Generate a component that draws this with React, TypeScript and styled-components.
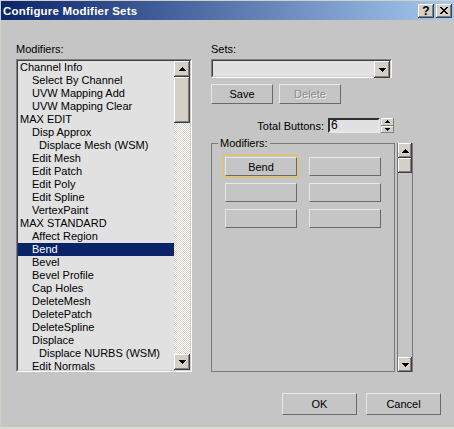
import React from "react";
import styled, { createGlobalStyle, css } from "styled-components";

const face = "#c5c5c5";
const listBg = "#e1e1e1";
const ctlFace = "#d4d0c8";
const selBlue = "#0a246a";

const GlobalStyle = createGlobalStyle`
  html, body {
    margin: 0;
    padding: 0;
    background: ${face};
  }
  body {
    font-family: "Liberation Sans", Arial, sans-serif;
    font-size: 11px;
    color: #000;
  }
`;

const raised = css`
  box-shadow: inset -1px -1px #404040, inset 1px 1px #fff,
    inset -2px -2px #808080, inset 2px 2px ${ctlFace};
`;

const Window = styled.div`
  width: 454px;
  height: 429px;
  box-sizing: border-box;
  background: ${face};
  border-top: 1px solid ${ctlFace};
  border-left: 1px solid ${ctlFace};
  border-bottom: 2px solid #dcdad4;
  display: flex;
  flex-direction: column;
`;

const TitleBar = styled.div`
  height: 19px;
  display: flex;
  align-items: center;
  padding: 0 2px;
  background: linear-gradient(to right, ${selBlue}, #a6caf0);
  color: #fff;
  font-weight: bold;
  font-size: 11.5px;
`;

const Title = styled.span`
  flex: 1;
  white-space: nowrap;
  letter-spacing: 0.2px;
`;

const TitleButton = styled.div`
  width: 16px;
  height: 14px;
  box-sizing: border-box;
  margin-left: 2px;
  background: ${ctlFace};
  ${raised};
  display: flex;
  align-items: center;
  justify-content: center;
  color: #000;
  font-weight: bold;
  font-size: 12px;
  line-height: 14px;
`;

const Body = styled.div`
  flex: 1;
  display: flex;
  flex-direction: column;
  padding: 23px 13px 0 15px;
`;

const Columns = styled.div`
  display: grid;
  grid-template-columns: 176px 202px;
  column-gap: 19px;
`;

const Column = styled.div`
  display: flex;
  flex-direction: column;
`;

const Label = styled.div`
  height: 13px;
  line-height: 13px;
  margin-bottom: 3px;
  white-space: nowrap;
`;

const Sunken = styled.div`
  box-sizing: border-box;
  border: 1px solid;
  border-color: #808080 #fff #fff #808080;
`;

const SunkenInner = styled.div`
  box-sizing: border-box;
  height: 100%;
  border: 1px solid;
  border-color: #404040 ${ctlFace} ${ctlFace} #404040;
  background: ${listBg};
  display: flex;
`;

const ListBox = styled(Sunken)`
  height: 313px;
`;

const Items = styled.div`
  flex: 1;
  overflow: hidden;
  display: flex;
  flex-direction: column;
`;

const Item = styled.div<{ $level: number; $selected?: boolean }>`
  flex: none;
  height: 13px;
  line-height: 13px;
  white-space: nowrap;
  padding-left: ${p => [2, 14, 21][p.$level]}px;
  background: ${p => (p.$selected ? selBlue : "transparent")};
  color: ${p => (p.$selected ? "#fff" : "#000")};
`;

const VScroll = styled.div<{ $plain?: boolean }>`
  width: 16px;
  flex: none;
  display: flex;
  flex-direction: column;
  box-sizing: border-box;
  ${p =>
    p.$plain &&
    css`
      border-left: 1px solid #7a7a7a;
      border-right: 1px solid #7a7a7a;
      background: ${face};
    `}
`;

const ArrowButton = styled.div<{ $h?: number; $w?: number }>`
  flex: none;
  height: ${p => p.$h ?? 16}px;
  ${p => p.$w && `width: ${p.$w}px;`}
  box-sizing: border-box;
  background: ${ctlFace};
  ${raised};
  display: flex;
  align-items: center;
  justify-content: center;
`;

const Track = styled.div<{ $checker?: boolean }>`
  flex: 1;
  display: flex;
  flex-direction: column;
  ${p =>
    p.$checker &&
    css`
      background-color: #fff;
      background-image: repeating-conic-gradient(
        ${ctlFace} 0 25%,
        #fff 0 50%
      );
      background-size: 2px 2px;
    `}
`;

const Thumb = styled.div<{ $h: number }>`
  height: ${p => p.$h}px;
  flex: none;
  background: ${ctlFace};
  ${raised};
`;

const Combo = styled(Sunken)`
  height: 19px;
  width: 181px;
`;

const ComboField = styled.div`
  flex: 1;
`;

const ButtonRow = styled.div`
  display: flex;
  gap: 6px;
  margin-top: 6px;
`;

const MaxButton = styled.button<{ $w: number; $h: number }>`
  display: block;
  width: ${p => p.$w}px;
  height: ${p => p.$h}px;
  box-sizing: border-box;
  padding: 0;
  margin: 0;
  background: ${face};
  border: 1px solid;
  border-color: #e8e8e8 #6a6a6a #6a6a6a #e8e8e8;
  font-family: inherit;
  font-size: 11px;
  color: #000;
  &:disabled {
    color: #8a8a8a;
    text-shadow: 1px 1px #f0f0f0;
  }
`;

/* the yellow frame 3ds Max draws round the active set button */
const ActiveFrame = styled.div`
  margin: -2px;
  padding: 1px;
  border: 1px solid #f0c23e;
`;

const TotalRow = styled.div`
  display: flex;
  align-items: center;
  justify-content: flex-end;
  margin-top: 14px;
  padding-right: 19px;
  height: 15px;
`;

const TotalLabel = styled.span`
  margin-right: 4px;
`;

const SpinField = styled.div`
  width: 52px;
  height: 15px;
  box-sizing: border-box;
  border: 2px solid;
  border-color: #303030 #e8e8e8 #e8e8e8 #303030;
  background: ${listBg};
  line-height: 11px;
  padding-left: 1px;
  font-size: 12px;
`;

const Spinner = styled.div`
  width: 13px;
  height: 15px;
  margin-left: 1px;
  display: flex;
  flex-direction: column;
`;

const SpinHalf = styled.div`
  flex: 1;
  background: ${ctlFace};
  box-shadow: inset -1px -1px #808080, inset 1px 1px #fff;
  display: flex;
  align-items: center;
  justify-content: center;
`;

const GroupRow = styled.div`
  display: flex;
  align-items: flex-end;
  gap: 2px;
  margin-top: 4px;
`;

const Group = styled.fieldset`
  width: 184px;
  height: 235px;
  box-sizing: border-box;
  margin: 0;
  padding: 0;
  min-width: 0;
  border: 1px solid #7a7a7a;
`;

const Legend = styled.legend`
  margin-left: 6px;
  padding: 0 2px;
  line-height: 13px;
  height: 13px;
`;

const SlotGrid = styled.div`
  display: grid;
  grid-template-columns: 72px 72px;
  grid-auto-rows: 19px;
  column-gap: 12px;
  row-gap: 7px;
  margin: 7px 0 0 13px;
`;

const Footer = styled.div`
  display: flex;
  justify-content: flex-end;
  gap: 9px;
  margin-top: 21px;
`;

const ArrowUp = ({ w = 7 }: { w?: number }) =>
  w === 7 ? (
    <svg width="7" height="4" viewBox="0 0 7 4" shapeRendering="crispEdges">
      <path d="M3 0h1v1h1v1h1v1h1v1H0V3h1V2h1V1h1z" fill="#000" />
    </svg>
  ) : (
    <svg width="5" height="3" viewBox="0 0 5 3" shapeRendering="crispEdges">
      <path d="M2 0h1v1h1v1h1v1H0V2h1V1h1z" fill="#000" />
    </svg>
  );

const ArrowDown = ({ w = 7 }: { w?: number }) =>
  w === 7 ? (
    <svg width="7" height="4" viewBox="0 0 7 4" shapeRendering="crispEdges">
      <path d="M0 0h7v1H6v1H5v1H4v1H3V3H2V2H1V1H0z" fill="#000" />
    </svg>
  ) : (
    <svg width="5" height="3" viewBox="0 0 5 3" shapeRendering="crispEdges">
      <path d="M0 0h5v1H4v1H3v1H2V2H1V1H0z" fill="#000" />
    </svg>
  );

const CloseGlyph = () => (
  <svg width="8" height="7" viewBox="0 0 8 7" shapeRendering="crispEdges">
    <path
      d="M0 0h2v1h1v1h2V1h1V0h2v1H7v1H6v1H5v1h1v1h1v1h1v1H6V6H5V5H3v1H2v1H0V6h1V5h1V4h1V3H2V2H1V1H0z"
      fill="#000"
    />
  </svg>
);

const modifiers: [string, number][] = [
  ["Channel Info", 0],
  ["Select By Channel", 1],
  ["UVW Mapping Add", 1],
  ["UVW Mapping Clear", 1],
  ["MAX EDIT", 0],
  ["Disp Approx", 1],
  ["Displace Mesh (WSM)", 2],
  ["Edit Mesh", 1],
  ["Edit Patch", 1],
  ["Edit Poly", 1],
  ["Edit Spline", 1],
  ["VertexPaint", 1],
  ["MAX STANDARD", 0],
  ["Affect Region", 1],
  ["Bend", 1],
  ["Bevel", 1],
  ["Bevel Profile", 1],
  ["Cap Holes", 1],
  ["DeleteMesh", 1],
  ["DeletePatch", 1],
  ["DeleteSpline", 1],
  ["Displace", 1],
  ["Displace NURBS (WSM)", 2],
  ["Edit Normals", 1]
];

const slots = ["Bend", "", "", "", "", ""];

const App = (): JSX.Element => (
  <>
    <GlobalStyle />
    <Window>
      <TitleBar>
        <Title>Configure Modifier Sets</Title>
        <TitleButton>?</TitleButton>
        <TitleButton>
          <CloseGlyph />
        </TitleButton>
      </TitleBar>
      <Body>
        <Columns>
          <Column>
            <Label>Modifiers:</Label>
            <ListBox>
              <SunkenInner>
                <Items>
                  {modifiers.map(([name, level]) => (
                    <Item key={name} $level={level} $selected={name === "Bend"}>
                      {name}
                    </Item>
                  ))}
                </Items>
                <VScroll>
                  <ArrowButton>
                    <ArrowUp />
                  </ArrowButton>
                  <Track $checker>
                    <Thumb $h={46} />
                  </Track>
                  <ArrowButton>
                    <ArrowDown />
                  </ArrowButton>
                </VScroll>
              </SunkenInner>
            </ListBox>
          </Column>
          <Column>
            <Label>Sets:</Label>
            <Combo>
              <SunkenInner>
                <ComboField />
                <ArrowButton $h={17} $w={16}>
                  <ArrowDown />
                </ArrowButton>
              </SunkenInner>
            </Combo>
            <ButtonRow>
              <MaxButton $w={62} $h={20}>
                Save
              </MaxButton>
              <MaxButton $w={62} $h={20} disabled>
                Delete
              </MaxButton>
            </ButtonRow>
            <TotalRow>
              <TotalLabel>Total Buttons:</TotalLabel>
              <SpinField>6</SpinField>
              <Spinner>
                <SpinHalf>
                  <ArrowUp w={5} />
                </SpinHalf>
                <SpinHalf>
                  <ArrowDown w={5} />
                </SpinHalf>
              </Spinner>
            </TotalRow>
            <GroupRow>
              <Group>
                <Legend>Modifiers:</Legend>
                <SlotGrid>
                  {slots.map((s, i) =>
                    i === 0 ? (
                      <ActiveFrame key={i}>
                        <MaxButton $w={72} $h={19}>
                          {s}
                        </MaxButton>
                      </ActiveFrame>
                    ) : (
                      <MaxButton key={i} $w={72} $h={19}>
                        {s}
                      </MaxButton>
                    )
                  )}
                </SlotGrid>
              </Group>
              <VScroll $plain style={{ height: 229 }}>
                <ArrowButton $h={15}>
                  <ArrowUp />
                </ArrowButton>
                <Thumb $h={15} />
                <Track />
                <ArrowButton $h={15}>
                  <ArrowDown />
                </ArrowButton>
              </VScroll>
            </GroupRow>
          </Column>
        </Columns>
        <Footer>
          <MaxButton $w={75} $h={22}>
            OK
          </MaxButton>
          <MaxButton $w={75} $h={22}>
            Cancel
          </MaxButton>
        </Footer>
      </Body>
    </Window>
  </>
);

export default App;
